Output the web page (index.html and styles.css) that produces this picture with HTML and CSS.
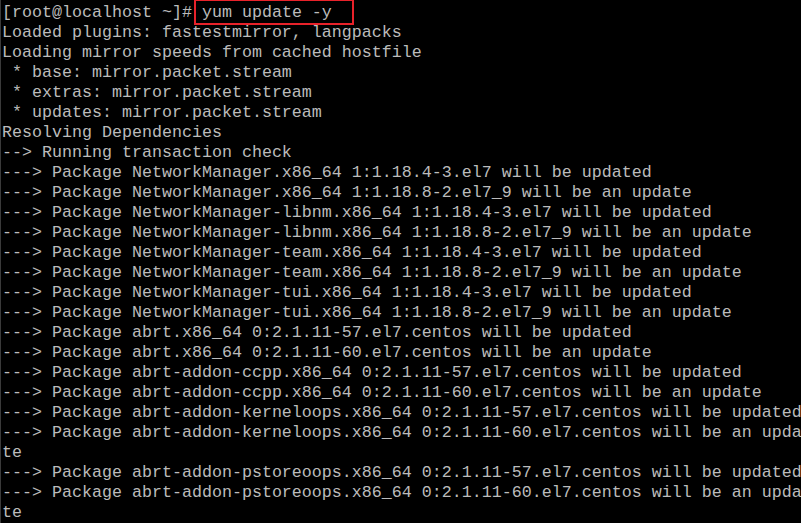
FILE: index.html
```html
<!DOCTYPE html>
<html>
<head>
<meta charset="utf-8">
<link rel="stylesheet" href="styles.css">
</head>
<body>
<div class="term"><pre class="out">[root@localhost ~]# <span class="hl">yum update -y</span>
Loaded plugins: fastestmirror, langpacks
Loading mirror speeds from cached hostfile
 * base: mirror.packet.stream
 * extras: mirror.packet.stream
 * updates: mirror.packet.stream
Resolving Dependencies
--&gt; Running transaction check
---&gt; Package NetworkManager.x86_64 1:1.18.4-3.el7 will be updated
---&gt; Package NetworkManager.x86_64 1:1.18.8-2.el7_9 will be an update
---&gt; Package NetworkManager-libnm.x86_64 1:1.18.4-3.el7 will be updated
---&gt; Package NetworkManager-libnm.x86_64 1:1.18.8-2.el7_9 will be an update
---&gt; Package NetworkManager-team.x86_64 1:1.18.4-3.el7 will be updated
---&gt; Package NetworkManager-team.x86_64 1:1.18.8-2.el7_9 will be an update
---&gt; Package NetworkManager-tui.x86_64 1:1.18.4-3.el7 will be updated
---&gt; Package NetworkManager-tui.x86_64 1:1.18.8-2.el7_9 will be an update
---&gt; Package abrt.x86_64 0:2.1.11-57.el7.centos will be updated
---&gt; Package abrt.x86_64 0:2.1.11-60.el7.centos will be an update
---&gt; Package abrt-addon-ccpp.x86_64 0:2.1.11-57.el7.centos will be updated
---&gt; Package abrt-addon-ccpp.x86_64 0:2.1.11-60.el7.centos will be an update
---&gt; Package abrt-addon-kerneloops.x86_64 0:2.1.11-57.el7.centos will be updated
---&gt; Package abrt-addon-kerneloops.x86_64 0:2.1.11-60.el7.centos will be an upda
te
---&gt; Package abrt-addon-pstoreoops.x86_64 0:2.1.11-57.el7.centos will be updated
---&gt; Package abrt-addon-pstoreoops.x86_64 0:2.1.11-60.el7.centos will be an upda
te
</pre></div>
</body>
</html>
```
FILE: styles.css
```css
html, body {
  margin: 0;
  padding: 0;
  background: #000;
  overflow: hidden;
}
.term {
  width: 801px;
  height: 523px;
  box-sizing: border-box;
  border-left: 1px solid #3a3a3a;
  background: #000;
  padding: 3px 0 0 1px;
  overflow: hidden;
}
.out {
  margin: 0;
  font-family: "Liberation Mono", "Courier New", monospace;
  font-size: 16.667px;
  line-height: 20px;
  color: #bbbbbb;
  white-space: pre;
}
.hl {
  position: relative;
}
.hl::after {
  content: "";
  position: absolute;
  left: -8px;
  right: -22px;
  top: -4px;
  bottom: -3px;
  border: 2px solid #e8222a;
}
```
